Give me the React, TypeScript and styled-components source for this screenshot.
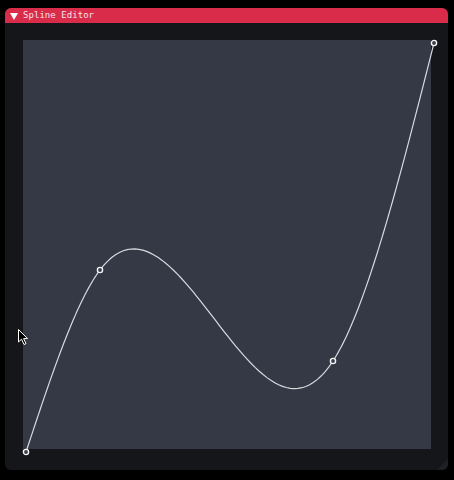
import React from "react";
import styled, { createGlobalStyle } from "styled-components";

const Global = createGlobalStyle`
  html, body { margin: 0; padding: 0; background: #000; }
  body { width: 454px; height: 480px; overflow: hidden; font-family: "DejaVu Sans Mono", monospace; }
`;

const Page = styled.div`
  width: 454px;
  height: 480px;
  padding: 8px 6px 10px 5px;
  box-sizing: border-box;
  position: relative;
`;

const Window = styled.div`
  width: 443px;
  height: 462px;
  display: flex;
  flex-direction: column;
  background: #15161a;
  border-radius: 6px;
  overflow: hidden;
  position: relative;
`;

const TitleBar = styled.div`
  height: 15px;
  flex: none;
  background: #d92c4a;
  display: flex;
  align-items: center;
  gap: 5px;
  padding-left: 5px;
  color: #f6e2e6;
  font-size: 9px;
  line-height: 15px;
  letter-spacing: 0.05px;
`;

const Arrow = styled.span`
  width: 0;
  height: 0;
  border-left: 4px solid transparent;
  border-right: 4px solid transparent;
  border-top: 7px solid #ffffff;
  margin-top: 1px;
`;

const Body = styled.div`
  flex: 1;
  padding: 17px 17px 21px 18px;
  display: flex;
`;

const Canvas = styled.div`
  width: 408px;
  height: 409px;
  background: #343945;
  position: relative;
`;

const Overlay = styled.svg`
  position: absolute;
  left: 0;
  top: 0;
  overflow: visible;
`;

const Grip = styled.div`
  position: absolute;
  right: 0;
  bottom: 0;
  width: 0;
  height: 0;
  border-left: 11px solid transparent;
  border-bottom: 11px solid #1e2027;
`;

const Cursor = styled.svg`
  position: absolute;
  left: 18px;
  top: 329px;
`;

const pts: [number, number][] = [
  [3, 412],
  [77, 230],
  [310, 321],
  [411, 3],
];

function naturalSpline(p: [number, number][]) {
  const n = p.length - 1;
  const h: number[] = [];
  for (let i = 0; i < n; i++) h.push(p[i + 1][0] - p[i][0]);
  const a: number[] = [], b: number[] = [], c: number[] = [], r: number[] = [];
  for (let i = 1; i < n; i++) {
    a.push(h[i - 1]);
    b.push(2 * (h[i - 1] + h[i]));
    c.push(h[i]);
    r.push(
      6 * ((p[i + 1][1] - p[i][1]) / h[i] - (p[i][1] - p[i - 1][1]) / h[i - 1])
    );
  }
  const m = n - 1;
  for (let i = 1; i < m; i++) {
    const w = a[i] / b[i - 1];
    b[i] -= w * c[i - 1];
    r[i] -= w * r[i - 1];
  }
  const inner: number[] = new Array(m).fill(0);
  for (let i = m - 1; i >= 0; i--) {
    inner[i] = (r[i] - (i < m - 1 ? c[i] * inner[i + 1] : 0)) / b[i];
  }
  const M = [0, ...inner, 0];
  const out: string[] = [];
  for (let i = 0; i < n; i++) {
    const x0 = p[i][0], x1 = p[i + 1][0], y0 = p[i][1], y1 = p[i + 1][1];
    const hi = h[i];
    const steps = 60;
    for (let s = i === 0 ? 0 : 1; s <= steps; s++) {
      const x = x0 + (hi * s) / steps;
      const A = x1 - x, B = x - x0;
      const y =
        (M[i] * A * A * A) / (6 * hi) +
        (M[i + 1] * B * B * B) / (6 * hi) +
        (y0 / hi - (M[i] * hi) / 6) * A +
        (y1 / hi - (M[i + 1] * hi) / 6) * B;
      out.push(`${out.length === 0 ? "M" : "L"}${x.toFixed(2)} ${y.toFixed(2)}`);
    }
  }
  return out.join(" ");
}

const curve = naturalSpline(pts);

export default function App() {
  return (
    <>
      <Global />
      <Page>
        <Window>
          <TitleBar>
            <Arrow />
            <span>Spline Editor</span>
          </TitleBar>
          <Body>
            <Canvas>
              <Overlay width="408" height="409">
                <path d={curve} fill="none" stroke="#d8dadf" strokeWidth="1.2" />
                {pts.map(([x, y], i) => (
                  <circle key={i} cx={x} cy={y} r="2.6" fill="#3a3f4b" stroke="#f4f4f6" strokeWidth="1.4" />
                ))}
              </Overlay>
            </Canvas>
          </Body>
          <Grip />
        </Window>
        <Cursor width="12" height="18" viewBox="0 0 12 18">
          <path d="M0.5 0.5 L0.5 13 L3.5 10.2 L6 15.5 L8 14.6 L5.6 9.6 L9.5 9.6 Z" fill="#000" stroke="#fff" strokeWidth="1" strokeLinejoin="round" />
        </Cursor>
      </Page>
    </>
  );
}
